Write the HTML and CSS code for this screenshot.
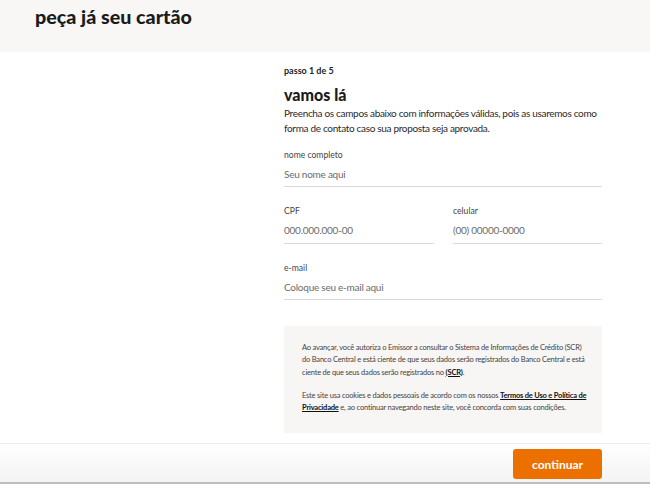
FILE: index.html
```html
<!DOCTYPE html>
<html lang="pt-BR">
<head>
<meta charset="utf-8">
<title>peça já seu cartão</title>
<link rel="stylesheet" href="styles.css">
</head>
<body>
<header class="top">
  <h1 class="title">peça já seu cartão</h1>
</header>
<main class="main">
  <section class="form">
    <p class="step">passo 1 de 5</p>
    <h2 class="heading">vamos lá</h2>
    <p class="intro">Preencha os campos abaixo com informações válidas, pois as usaremos como forma de contato caso sua proposta seja aprovada.</p>
    <div class="field field-first">
      <label class="label">nome completo</label>
      <div class="input">Seu nome aqui</div>
    </div>
    <div class="row">
      <div class="field">
        <label class="label">CPF</label>
        <div class="input">000.000.000-00</div>
      </div>
      <div class="field">
        <label class="label">celular</label>
        <div class="input">(00) 00000-0000</div>
      </div>
    </div>
    <div class="field">
      <label class="label">e-mail</label>
      <div class="input">Coloque seu e-mail aqui</div>
    </div>
    <div class="notice">
      <p>Ao avançar, você autoriza o Emissor a consultar o Sistema de Informações de Crédito (SCR) do Banco Central e está ciente de que seus dados serão registrados do Banco Central e está ciente de que seus dados serão registrados no <a href="#">(SCR)</a>.</p>
      <p>Este site usa cookies e dados pessoais de acordo com os nossos <a href="#">Termos de Uso e Política de Privacidade</a> e, ao continuar navegando neste site, você concorda com suas condições.</p>
    </div>
  </section>
</main>
<footer class="bar">
  <div class="bar-inner">
    <button class="btn">continuar</button>
  </div>
</footer>
</body>
</html>
```
FILE: styles.css
```css
* { box-sizing: border-box; }
html, body { margin: 0; padding: 0; }
body {
  font-family: "Lato", "Open Sans", sans-serif;
  color: #222;
  background: #fff;
  width: 650px;
  height: 484px;
  overflow: hidden;
}
.top {
  background: #f8f7f5;
  height: 52px;
  padding: 5px 0 0 35px;
}
.title {
  margin: 0;
  font-size: 19.7px;
  font-weight: 900;
  line-height: 24px;
  color: #1b1b1b;
}
.main {
  height: 391px;
  padding-left: 284px;
}
.form {
  width: 318px;
  padding-top: 12px;
}
.step {
  margin: 0;
  font-size: 9px;
  font-weight: 700;
  line-height: 14px;
  color: #222;
}
.heading {
  margin: 6px 0 0;
  font-size: 16px;
  font-weight: 900;
  line-height: 22px;
  color: #1b1b1b;
}
.intro {
  margin: 0;
  font-size: 10px;
  letter-spacing: -0.32px;
  line-height: 15px;
  color: #2a2a2a;
}
.field {
  margin-top: 18px;
  border-bottom: 1px solid #d9d9d9;
  padding-bottom: 5.5px;
}
.field-first { margin-top: 12.5px; }
.label {
  display: block;
  font-size: 8.6px;
  line-height: 12px;
  color: #444;
}
.input {
  margin-top: 6px;
  font-size: 10px;
  letter-spacing: -0.25px;
  line-height: 14px;
  color: #6b6b6b;
}
.row {
  display: grid;
  grid-template-columns: 150px 149px;
  column-gap: 19px;
}
.notice {
  margin-top: 25.5px;
  background: #f7f6f4;
  padding: 16px 13px 18px 18px;
  font-size: 7.5px;
  letter-spacing: -0.2px;
  line-height: 12.5px;
  color: #444;
}
.notice p { margin: 0; }
.notice p + p { margin-top: 10.5px; }
.notice a {
  color: #111;
  font-weight: 700;
  text-decoration: underline;
}
.bar {
  height: 41px;
  border-top: 1px solid #ececec;
  border-bottom: 2px solid #bdbdbd;
  background: linear-gradient(#ffffff, #f3f3f3);
}
.bar-inner {
  width: 602px;
  display: flex;
  justify-content: flex-end;
  padding-top: 5px;
}
.btn {
  width: 89px;
  height: 30px;
  border: 0;
  border-radius: 3px;
  background: #ec7000;
  color: #fff;
  font-family: "Lato", "Open Sans", sans-serif;
  font-size: 12px;
  font-weight: 700;
}
```
